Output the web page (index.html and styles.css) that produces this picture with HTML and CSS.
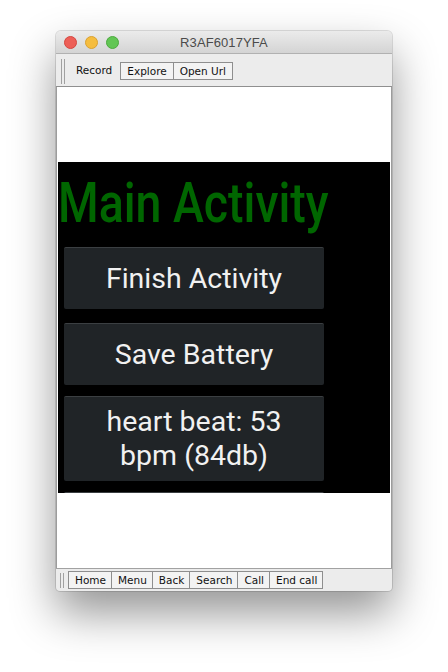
FILE: index.html
```html
<!DOCTYPE html>
<html>
<head>
<meta charset="utf-8">
<link rel="stylesheet" href="styles.css">
</head>
<body>
<div class="window">
  <div class="titlebar">
    <div class="lights">
      <span class="light red"></span>
      <span class="light yellow"></span>
      <span class="light green"></span>
    </div>
    <div class="title">R3AF6017YFA</div>
  </div>
  <div class="toolbar">
    <div class="grip"></div>
    <span class="label">Record</span>
    <div class="btngroup">
      <span class="tbtn">Explore</span>
      <span class="tbtn">Open Url</span>
    </div>
  </div>
  <div class="screen">
    <div class="device">
      <div class="apptitle"><span class="apptitle-text">Main Activity</span></div>
      <div class="abtn b1">Finish Activity</div>
      <div class="abtn b2">Save Battery</div>
      <div class="abtn b3">heart beat: 53<br>bpm (84db)</div>
      <div class="abtn b4"></div>
    </div>
  </div>
  <div class="bottombar">
    <div class="grip small"></div>
    <div class="btngroup">
      <span class="bbtn">Home</span>
      <span class="bbtn">Menu</span>
      <span class="bbtn">Back</span>
      <span class="bbtn">Search</span>
      <span class="bbtn">Call</span>
      <span class="bbtn">End call</span>
    </div>
  </div>
</div>
</body>
</html>
```
FILE: styles.css
```css
html, body {
  margin: 0;
  padding: 0;
  background: #ffffff;
}
body {
  width: 448px;
  height: 672px;
  overflow: hidden;
  font-family: "DejaVu Sans", "Liberation Sans", sans-serif;
}
.window {
  margin: 31px 0 0 56px;
  width: 336px;
  height: 560px;
  border-radius: 5px 5px 4px 4px;
  background: #ececec;
  box-shadow: 0 22px 45px rgba(0,0,0,0.42), 0 0 0 1px rgba(0,0,0,0.12);
  display: flex;
  flex-direction: column;
  overflow: hidden;
}
.titlebar {
  height: 22px;
  border-bottom: 1px solid #b1b1b1;
  background: linear-gradient(#ebebeb, #d4d4d4);
  display: flex;
  align-items: center;
  position: relative;
  flex: none;
}
.lights {
  display: flex;
  gap: 8px;
  padding-left: 8px;
}
.light {
  width: 11px;
  height: 11px;
  border-radius: 50%;
  display: block;
}
.red { background: #ed5f57; border: 0.5px solid #d4463f; }
.yellow { background: #f5bd3f; border: 0.5px solid #d9a130; }
.green { background: #62c654; border: 0.5px solid #4ca93e; }
.title {
  position: absolute;
  left: 0;
  right: 0;
  top: 4px;
  text-align: center;
  font-family: "Liberation Sans", Arial, sans-serif;
  font-size: 13px;
  color: #4b4b4b;
  letter-spacing: 0.1px;
}
.toolbar {
  height: 32px;
  border-bottom: 1px solid #8f8f8f;
  display: flex;
  align-items: center;
  flex: none;
  font-size: 10.5px;
  color: #111;
}
.grip {
  width: 2px;
  height: 25px;
  margin-left: 5px;
  border-left: 1px solid #a0a0a0;
  border-right: 1px solid #a0a0a0;
  margin-top: 2px;
}
.grip.small {
  height: 15px;
  margin-left: 4px;
  margin-top: 0;
}
.label {
  margin-left: 11px;
  margin-right: 8px;
}
.btngroup {
  display: flex;
}
.tbtn, .bbtn {
  display: block;
  height: 16px;
  line-height: 16px;
  border: 1px solid #8e8e8e;
  background: #f3f3f3;
}
.tbtn {
  margin-top: 1px;
  padding: 0 6px;
}
.bbtn {
  padding: 0 5px 0 6px;
}
.tbtn + .tbtn, .bbtn + .bbtn {
  border-left: none;
}
.screen {
  height: 481px;
  border-left: 1px solid #9c9c9c;
  border-right: 1px solid #9c9c9c;
  background: #ffffff;
  padding: 75px 1px 0 1px;
  box-sizing: border-box;
  flex: none;
}
.device {
  height: 331px;
  background: #000000;
  overflow: hidden;
  padding: 8px 0 0 0;
  box-sizing: border-box;
  font-family: Roboto, "Noto Sans", sans-serif;
}
.apptitle {
  height: 66px;
  line-height: 66px;
  font-size: 56px;
  font-weight: 500;
  color: #006600;
  white-space: nowrap;
}
.apptitle-text {
  display: inline-block;
  transform: scaleX(0.83);
  transform-origin: 0 50%;
}
.abtn {
  margin-left: 6px;
  width: 260px;
  box-sizing: border-box;
  background: #202427;
  border-top: 1px solid #3b3f42;
  border-radius: 2px;
  color: #f1f1f1;
  font-size: 28.5px;
  text-align: center;
  display: flex;
  align-items: center;
  justify-content: center;
  line-height: 34px;
}
.b1 { margin-top: 11px; height: 62px; }
.b2 { margin-top: 14px; height: 62px; }
.b3 { margin-top: 11px; height: 85px; }
.b4 { margin-top: 11px; height: 60px; }
.bottombar {
  height: 22px;
  border-top: 1px solid #a2a2a2;
  display: flex;
  align-items: center;
  flex: none;
  font-size: 10.5px;
  color: #111;
}
.bottombar .btngroup {
  margin-left: 4px;
}
```
